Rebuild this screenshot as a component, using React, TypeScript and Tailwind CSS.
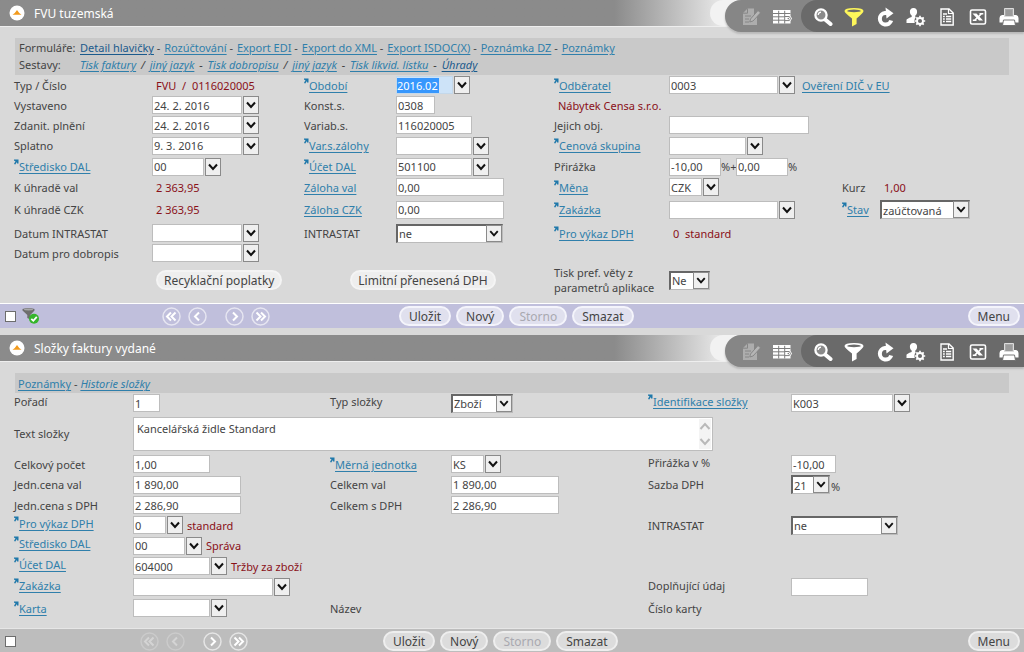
import { useId, type ReactNode } from "react";
import { clsx } from "clsx";

const link = "text-[#2f7fab] underline underline-offset-2";
const currentLink = "text-[#1b5a8c] underline underline-offset-2";

/* ---------- small drawings ---------- */

function Chevron() {
  return (
    <svg viewBox="0 0 16 18" className="h-[18px] w-4" aria-hidden="true">
      <path d="M4 6.5 L8 11 L12 6.5" fill="none" stroke="#111" strokeWidth="2" />
    </svg>
  );
}

function LinkArrow() {
  return (
    <svg viewBox="0 0 5 6" className="h-[6px] w-[5px] shrink-0" aria-hidden="true">
      <path d="M0 0.5 H4.5 V4.5 H3 L2.8 3 L1.3 5.5 L0 5 L1.5 2 L0 1.8 Z" fill="#1f78aa" />
    </svg>
  );
}

function CollapseIcon() {
  return (
    <svg viewBox="0 0 16 16" className="size-4" aria-hidden="true">
      <circle cx="8" cy="8" r="7.5" fill="#fff" />
      <path d="M3.5 9.8 Q6 8.4 8 5 Q10 8.4 12.5 9.8 Z" fill="#f29a1c" />
    </svg>
  );
}

function EditIcon() {
  return (
    <svg viewBox="0 0 20 20" className="size-5" aria-hidden="true">
      <path d="M6.5 1.5 H13 V8 L16 9 V18 H2 V6 Z" fill="#adadad" />
      <path d="M2 6.2 H6.5 V1.5" fill="none" stroke="#868686" strokeWidth="1" />
      <path d="M4 9 H10 M4 12 H8 M4 15 H8" stroke="#868686" strokeWidth="1" />
      <path d="M9.5 12 L17 3.5 L19.6 5.8 L12 14 L8.800 15 Z" fill="#b5b5b5" stroke="#828282" strokeWidth="0.9" />
    </svg>
  );
}

function TableIcon() {
  return (
    <svg viewBox="0 0 20 20" className="size-5" aria-hidden="true">
      <path d="M1 3 H18.500 V9 L20 11.500 L18.500 14 V16.500 H1 Z" fill="#fff" />
      <path d="M1 6.500 H18.500 M1 9.800 H12.500 M1 13.200 H12.500 M6.700 3.800 V16.500 M12.700 3.800 V16.500" stroke="#7d7d7d" strokeWidth="1" />
      <path d="M12.500 9.500 H17.300 L18.500 11.500 L17.300 13.600 H12.500" fill="none" stroke="#7d7d7d" strokeWidth="1" />
      <circle cx="16.300" cy="11.600" r="0.800" fill="#7d7d7d" />
    </svg>
  );
}

function SearchIcon() {
  return (
    <svg viewBox="0 0 20 20" className="size-5" aria-hidden="true">
      <path d="M11.5 12 L17.5 17" stroke="#fff" strokeWidth="4" strokeLinecap="round" />
      <circle cx="8" cy="8" r="5.6" fill="#8a8a8a" stroke="#fff" strokeWidth="2.3" />
      <path d="M5.2 8 A3 3 0 0 1 8 5.2" fill="none" stroke="#fff" strokeWidth="1.2" />
    </svg>
  );
}

function FunnelIcon({ active }: { active?: boolean }) {
  const c = active ? "#fdf65a" : "#fff";
  return (
    <svg viewBox="0 0 20 20" className="size-5" aria-hidden="true">
      <path d="M0.5 4 Q0.5 1 10 1 Q19.5 1 19.5 4 Q19.5 5.8 12.6 11.5 V17 L8 19.5 V11.5 Q0.5 5.8 0.5 4 Z" fill={c} />
      <ellipse cx="10" cy="3.9" rx="6.8" ry="1.3" fill="#6a6a6a" />
    </svg>
  );
}

function ReloadIcon() {
  return (
    <svg viewBox="0 0 20 20" className="size-5" aria-hidden="true">
      <path d="M12 6 H10 A5.800 5.800 0 1 0 16.200 13.500" fill="none" stroke="#fff" strokeWidth="4" />
      <path d="M10.500 0.500 L18.500 6.300 L11.500 11.500 Z" fill="#fff" />
    </svg>
  );
}

function UserGearIcon() {
  return (
    <svg viewBox="0 0 20 20" className="size-5" aria-hidden="true">
      <path d="M7.5 1 C10 1 11.3 2.8 11.1 5 C11 6.8 10.2 7.8 9.3 8.5 V10 L11.5 11.2 L9 16 H0.5 V13 Q0.5 11.8 5.7 10 V8.5 C4.8 7.8 4 6.8 3.9 5 C3.7 2.8 5 1 7.5 1 Z" fill="#fff" />
      <circle cx="14" cy="14" r="5.6" fill="#6a6a6a" />
      <circle cx="14" cy="14" r="3" fill="none" stroke="#fff" strokeWidth="1.9" />
      <path d="M14 8.8 V10.5 M14 17.5 V19.2 M8.8 14 H10.5 M17.5 14 H19.2 M10.3 10.3 L11.6 11.6 M16.4 16.4 L17.7 17.7 M17.7 10.3 L16.4 11.6 M11.6 16.4 L10.3 17.7" stroke="#fff" strokeWidth="1.7" />
    </svg>
  );
}

function DocIcon() {
  return (
    <svg viewBox="0 0 20 20" className="size-5" aria-hidden="true">
      <path d="M4 2 H12 L16.2 6 V18 H4 Z" fill="none" stroke="#fff" strokeWidth="1.4" />
      <path d="M11.5 2 V6.5 H16" fill="none" stroke="#fff" strokeWidth="1.2" />
      <path d="M6 7 H10 M6 9.5 H7.8 M9 9.5 H14.2 M6 12 H7.8 M9 12 H14.2 M6 14.5 H7.8 M9 14.5 H14.2" stroke="#fff" strokeWidth="1.4" />
    </svg>
  );
}

function ExcelIcon() {
  return (
    <svg viewBox="0 0 20 20" className="size-5" aria-hidden="true">
      <rect x="2.5" y="3" width="15" height="14" rx="1.5" fill="none" stroke="#fff" strokeWidth="1.6" />
      <path d="M4.5 6.5 H8.5 L15 13.5 H11 Z" fill="#fff" />
      <path d="M13.8 6.5 L6.3 13.5 M11.5 6.7 H15.3 M4.8 13.3 H8.5" stroke="#fff" strokeWidth="1.6" />
    </svg>
  );
}

function PrinterIcon() {
  return (
    <svg viewBox="0 0 20 20" className="size-5" aria-hidden="true">
      <path d="M3 8 H17 Q19.5 8.5 19.5 11 V15.5 H0.5 V11 Q0.5 8.500 3 8 Z" fill="#fff" />
      <path d="M5.5 9.5 V1.5 H14.5 V9.5 Z" fill="#a9a9a9" stroke="#dcdcdc" strokeWidth="1" />
      <path d="M7 4 H13 M7 6 H13 M7 8 H13" stroke="#858585" strokeWidth="0.8" />
      <path d="M4.5 13 H15.5 L16.5 18.5 H3.5 Z" fill="#fff" stroke="#6a6a6a" strokeWidth="0.9" />
    </svg>
  );
}

function FilterOkIcon() {
  return (
    <svg viewBox="0 0 18 18" className="size-[18px]" aria-hidden="true">
      <path d="M0.5 2 Q6.5 0 12.5 2 V3.5 L8.3 8 V12.5 L5.3 11 V8 L0.5 3.5 Z" fill="#6e6e6e" />
      <ellipse cx="6.5" cy="2.5" rx="4.5" ry="0.9" fill="#a8a8a8" />
      <circle cx="12" cy="11.8" r="5" fill="#35b52c" />
      <path d="M9.3 11.8 L11.3 13.8 L14.8 9.8" fill="none" stroke="#fff" strokeWidth="1.8" />
    </svg>
  );
}

type NavKind = "first" | "prev" | "next" | "last";

const navPaths: Record<NavKind, string> = {
  first: "M9 5.5 L5 9.5 L9 13.5 M13.5 5.5 L9.5 9.5 L13.5 13.5",
  prev: "M11 5.5 L7 9.5 L11 13.5",
  next: "M8 5.5 L12 9.5 L8 13.5",
  last: "M5.5 5.5 L9.5 9.5 L5.5 13.5 M10 5.5 L14 9.5 L10 13.5",
};

function NavButton({ kind, label, dim }: { kind: NavKind; label: string; dim?: boolean }) {
  return (
    <button type="button" aria-label={label} disabled={dim} className={clsx("size-[19px]", dim && "opacity-35")}>
      <svg viewBox="0 0 19 19" className="size-[19px]" aria-hidden="true">
        <circle cx="9.5" cy="9.5" r="8.5" fill="none" stroke="#fff" strokeOpacity="0.6" strokeWidth="1.5" />
        <path d={navPaths[kind]} fill="none" stroke="#fff" strokeWidth="2" />
      </svg>
    </button>
  );
}

/* ---------- form controls ---------- */

function TextField({ id, label, value, className, selected }: {
  id?: string; label: string; value?: string; className: string; selected?: boolean;
}) {
  if (selected) {
    return (
      <span className="flex h-[18px] w-[57px] items-center border border-[#c4d8ea] bg-[#cde3f8]">
        <input
          id={id}
          aria-label={label}
          defaultValue={value}
          className="h-[15px] w-[42px] bg-[#3797fd] text-white outline-none"
        />
      </span>
    );
  }
  return (
    <input
      id={id}
      aria-label={label}
      defaultValue={value}
      className={clsx("h-[18px] border border-[#bdbdbd] bg-white px-px text-[#444] outline-none", className)}
    />
  );
}

function Combo({ id, label, value, width, selected }: {
  id?: string; label: string; value?: string; width: string; selected?: boolean;
}) {
  return (
    <span className="flex items-center gap-px">
      <TextField id={id} label={label} value={value} className={width} selected={selected} />
      <button
        type="button"
        aria-label={`${label} – výběr`}
        className="h-[18px] w-4 bg-[#efefef] outline outline-1 -outline-offset-1 outline-[#8a8a8a]"
      >
        <Chevron />
      </button>
    </span>
  );
}

function Select({ id, label, value, width, options = [] }: {
  id?: string; label: string; value: string; width: string; options?: string[];
}) {
  return (
    <span className="relative flex items-center">
      <select
        id={id}
        aria-label={label}
        defaultValue={value}
        className={clsx(
          "h-[19px] appearance-none border-t-2 border-r border-b border-l-2 border-t-[#666] border-r-[#bbb] border-b-[#bbb] border-l-[#666] bg-white pl-px leading-[15px] text-[#444] outline-none",
          width,
        )}
      >
        <option>{value}</option>
        {options.map((o) => (
          <option key={o}>{o}</option>
        ))}
      </select>
      <span className="pointer-events-none absolute top-px right-px h-[17px] w-4 overflow-hidden border border-[#8a8a8a] bg-[#efefef]">
        <svg viewBox="0 0 14 16" className="h-[15px] w-[14px]" aria-hidden="true">
          <path d="M3 5.5 L7 10 L11 5.5" fill="none" stroke="#111" strokeWidth="2" />
        </svg>
      </span>
    </span>
  );
}

type LabelKind = "plain" | "link" | "arrow";

function Field({ label, kind = "plain", raised, children }: {
  label: ReactNode; kind?: LabelKind; raised?: boolean; children: (id: string) => ReactNode;
}) {
  const id = useId();
  return (
    <>
      <span className={clsx("flex items-center whitespace-nowrap", raised && "pb-1")}>
        <span className="flex items-start">
          {kind === "arrow" && <LinkArrow />}
          {kind === "plain" ? <label htmlFor={id}>{label}</label> : <a href="#" className={link}>{label}</a>}
        </span>
      </span>
      <span className="flex items-center whitespace-nowrap">{children(id)}</span>
    </>
  );
}

function Value({ children }: { children: ReactNode }) {
  return <output className="px-1 whitespace-pre text-[#8a1018]">{children}</output>;
}

function Pill({ children, disabled, tone }: { children: ReactNode; disabled?: boolean; tone: "lavender" | "gray" | "plain" }) {
  return (
    <button
      type="button"
      disabled={disabled}
      className={clsx(
        "flex h-5 items-center rounded-full border-2 text-[12px] whitespace-nowrap",
        disabled ? "text-[#a9a9b0]" : "text-[#444]",
        tone === "lavender" && "border-[#f4f4fb] bg-[#e0e0ee] px-2",
        tone === "gray" && "border-[#eeeeee] bg-[#dcdcdc] px-2",
        tone === "plain" && "border-[#f4f4f4] bg-[#eeeeee] px-1.5",
      )}
    >
      {children}
    </button>
  );
}

/* ---------- panel frame ---------- */

function PanelHeader({ title, filterActive }: { title: string; filterActive?: boolean }) {
  const button = "flex w-[31px] justify-center pt-[7px]";
  return (
    <header className="mb-3 flex h-[26px] items-start justify-between bg-linear-to-r from-[#8b8b8b] from-60% to-[#e4e4e4] to-70% shadow-[0_1px_0_#eeeeee]">
      <div className="flex h-[26px] items-center gap-[9px] pl-[9px]">
        <button type="button" aria-label="Sbalit"><CollapseIcon /></button>
        <h1 className="text-[12px] text-white">{title}</h1>
      </div>
      <div className="h-[26px] rounded-l-full bg-[#f2f2f2] pl-[15px]">
        <div className="flex h-8 rounded-l-full bg-[#868686] pl-[10px] shadow-[0_2px_2px_#b9b9b9]">
          <button type="button" aria-label="Upravit" className={button}><EditIcon /></button>
          <button type="button" aria-label="Tabulka" className={button}><TableIcon /></button>
          <div className="ml-1 flex rounded-l-full bg-[#6a6a6a] pl-[6px]">
            <button type="button" aria-label="Hledat" className={button}><SearchIcon /></button>
            <button type="button" aria-label="Filtr" className={button}><FunnelIcon active={filterActive} /></button>
            <button type="button" aria-label="Obnovit" className={button}><ReloadIcon /></button>
            <button type="button" aria-label="Nastavení uživatele" className={button}><UserGearIcon /></button>
            <button type="button" aria-label="Dokument" className={button}><DocIcon /></button>
            <button type="button" aria-label="Excel" className={button}><ExcelIcon /></button>
            <button type="button" aria-label="Tisk" className={button}><PrinterIcon /></button>
          </div>
        </div>
      </div>
    </header>
  );
}

function PanelFooter({ tone, id }: { tone: "lavender" | "gray"; id: string }) {
  const lavender = tone === "lavender";
  return (
    <footer
      className={clsx(
        "flex items-center border-t pr-1",
        lavender ? "h-[25px] border-white bg-[#c0bfdc]" : "h-[25px] border-[#e6e6e6] bg-[#bdbdbd]",
      )}
    >
      <div className={clsx("flex items-center gap-[6px] pl-[5px]", lavender ? "w-[162px]" : "w-[140px]")}>
        <input
          type="checkbox"
          id={id}
          aria-label="Vybrat záznam"
          className="size-[11px] appearance-none border border-[#6d6d6d] bg-white checked:bg-[#555]"
        />
        {lavender && <FilterOkIcon />}
      </div>
      <div className={clsx("flex gap-[7px]", lavender ? "w-[237px]" : "w-[243px]")}>
        <NavButton kind="first" label="První" dim={!lavender} />
        <NavButton kind="prev" label="Předchozí" dim={!lavender} />
        <span className="w-1" />
        <NavButton kind="next" label="Další" />
        <NavButton kind="last" label="Poslední" />
      </div>
      <div className="flex flex-1 gap-[5px]">
        <Pill tone={tone}>Uložit</Pill>
        <Pill tone={tone}>Nový</Pill>
        <Pill tone={tone} disabled>Storno</Pill>
        <Pill tone={tone}>Smazat</Pill>
      </div>
      <Pill tone={tone}>Menu</Pill>
    </footer>
  );
}

const forms = ["Rozúčtování", "Export EDI", "Export do XML", "Export ISDOC(X)", "Poznámka DZ", "Poznámky"];

const reports = [
  { text: "Tisk faktury", after: " / " },
  { text: "jiný jazyk", after: " - " },
  { text: "Tisk dobropisu", after: " / " },
  { text: "jiný jazyk", after: " - " },
  { text: "Tisk likvid. lístku", after: " - " },
];

function InvoicePanel() {
  return (
    <section>
      <PanelHeader title="FVU tuzemská" filterActive />
      <nav className="mx-[15px] h-[37px] bg-[#c9c9c9] pt-px pl-1 leading-[17px] whitespace-nowrap">
        <div className="flex">
          <span className="w-[61px]">Formuláře:</span>
          <span>
            <a href="#" className={currentLink}>Detail hlavičky</a>
            {forms.map((f) => (
              <span key={f}>
                <span className="pr-px"> - </span>
                <a href="#" className={link}>{f}</a>
              </span>
            ))}
          </span>
        </div>
        <div className="flex">
          <span className="w-[61px]">Sestavy:</span>
          <span className="italic">
            {reports.map((r, i) => (
              <span key={i}>
                <a href="#" className={link}>{r.text}</a>
                <span className="px-[2px]">{r.after}</span>
              </span>
            ))}
            <a href="#" className={currentLink}>Úhrady</a>
          </span>
        </div>
      </nav>
      <form className="grid grid-cols-[138fr_152fr_92fr_158fr_115fr_173fr_38fr_144fr] grid-rows-[20px_20px_20px_21px_21px_20px_25px_22px_18px_36px] pb-[5px] pl-[14px]">
        <Field label="Typ / Číslo">{() => <Value>{"FVU  /  0116020005"}</Value>}</Field>
        <Field label="Období" kind="arrow">{(id) => <Combo id={id} label="Období" value="2016.02" width="w-[57px]" selected />}</Field>
        <Field label="Odběratel" kind="arrow">{(id) => <Combo id={id} label="Odběratel" value="0003" width="w-[109px]" />}</Field>
        <span className="col-span-2 flex items-center">
          <a href="#" className={clsx(link, "-ml-10 whitespace-nowrap")}>Ověření DIČ v EU</a>
        </span>

        <Field label="Vystaveno">{(id) => <Combo id={id} label="Vystaveno" value="24. 2. 2016" width="w-[90px]" />}</Field>
        <Field label="Konst.s.">{(id) => <TextField id={id} label="Konst.s." value="0308" className="w-[39px]" />}</Field>
        <span className="col-span-4 flex items-center"><Value>Nábytek Censa s.r.o.</Value></span>

        <Field label="Zdanit. plnění">{(id) => <Combo id={id} label="Zdanit. plnění" value="24. 2. 2016" width="w-[90px]" />}</Field>
        <Field label="Variab.s.">{(id) => <TextField id={id} label="Variab.s." value="116020005" className="w-[76px]" />}</Field>
        <Field label="Jejich obj.">{(id) => <TextField id={id} label="Jejich obj." className="w-[140px]" />}</Field>
        <span className="col-span-2" />

        <Field label="Splatno">{(id) => <Combo id={id} label="Splatno" value="9. 3. 2016" width="w-[90px]" />}</Field>
        <Field label="Var.s.zálohy" kind="arrow">{(id) => <Combo id={id} label="Var.s.zálohy" width="w-[76px]" />}</Field>
        <Field label="Cenová skupina" kind="arrow">{(id) => <Combo id={id} label="Cenová skupina" width="w-[77px]" />}</Field>
        <span className="col-span-2" />

        <Field label="Středisko DAL" kind="arrow">{(id) => <Combo id={id} label="Středisko DAL" value="00" width="w-[52px]" />}</Field>
        <Field label="Účet DAL" kind="arrow">{(id) => <Combo id={id} label="Účet DAL" value="501100" width="w-[76px]" />}</Field>
        <Field label="Přirážka">
          {(id) => (
            <>
              <TextField id={id} label="Přirážka" value="-10,00" className="w-[52px]" />
              <span className="w-[15px]">%+</span>
              <TextField label="Další přirážka" value="0,00" className="w-[52px]" />
              <span>%</span>
            </>
          )}
        </Field>
        <span className="col-span-2" />

        <Field label="K úhradě val">{() => <Value>2 363,95</Value>}</Field>
        <Field label="Záloha val" kind="link">{(id) => <TextField id={id} label="Záloha val" value="0,00" className="w-[108px]" />}</Field>
        <Field label="Měna" kind="arrow">{(id) => <Combo id={id} label="Měna" value="CZK" width="w-[33px]" />}</Field>
        <Field label="Kurz">{() => <Value>1,00</Value>}</Field>

        <Field label="K úhradě CZK">{() => <Value>2 363,95</Value>}</Field>
        <Field label="Záloha CZK" kind="link">{(id) => <TextField id={id} label="Záloha CZK" value="0,00" className="w-[108px]" />}</Field>
        <Field label="Zakázka" kind="arrow">{(id) => <Combo id={id} label="Zakázka" width="w-[109px]" />}</Field>
        <Field label="Stav" kind="arrow">{(id) => <Select id={id} label="Stav" value="zaúčtovaná" width="w-[90px]" />}</Field>

        <Field label="Datum INTRASTAT">{(id) => <Combo id={id} label="Datum INTRASTAT" width="w-[90px]" />}</Field>
        <Field label="INTRASTAT">{(id) => <Select id={id} label="INTRASTAT" value="ne" width="w-[107px]" options={["ano"]} />}</Field>
        <Field label="Pro výkaz DPH" kind="arrow">{() => <Value>{"0  standard"}</Value>}</Field>
        <span className="col-span-2" />

        <Field label="Datum pro dobropis">{(id) => <Combo id={id} label="Datum pro dobropis" width="w-[90px]" />}</Field>
        <span className="col-span-6" />

        <span />
        <span className="flex items-center pl-1"><Pill tone="plain">Recyklační poplatky</Pill></span>
        <span className="col-span-2 flex items-center justify-center pr-[12px]"><Pill tone="plain">Limitní přenesená DPH</Pill></span>
        <Field label={<>Tisk pref. věty z<br />parametrů aplikace</>}>
          {(id) => <Select id={id} label="Tisk pref. věty z parametrů aplikace" value="Ne" width="w-[41px]" options={["Ano"]} />}
        </Field>
      </form>
      <PanelFooter tone="lavender" id="invoice-mark" />
    </section>
  );
}

function ItemPanel() {
  return (
    <section>
      <PanelHeader title="Složky faktury vydané" />
      <nav className="mx-[15px] h-5 bg-[#c9c9c9] pt-[2px] pl-[3px] leading-[17px]">
        <a href="#" className={link}>Poznámky</a> - <a href="#" className={clsx(link, "italic")}>Historie složky</a>
      </nav>
      <form className="grid grid-cols-[119fr_197fr_121fr_197fr_143fr_233fr] grid-rows-[20px_41px_20px_21px_20px_20px_21px_20px_22px_20px] pb-[10px] pl-[14px]">
        <Field label="Pořadí" raised>{(id) => <TextField id={id} label="Pořadí" value="1" className="w-[27px]" />}</Field>
        <Field label="Typ složky" raised>{(id) => <Select id={id} label="Typ složky" value="Zboží" width="w-[62px]" />}</Field>
        <Field label="Identifikace složky" kind="arrow" raised>{(id) => <Combo id={id} label="Identifikace složky" value="K003" width="w-[102px]" />}</Field>

        <label htmlFor="item-text" className="flex items-center">Text složky</label>
        <span className="relative col-span-4 mr-[78px] flex items-center">
          <textarea
            id="item-text"
            defaultValue="Kancelářská židle Standard"
            className="h-[34px] w-full resize-none overflow-hidden border border-[#bdbdbd] bg-white px-[3px] py-[3px] text-[#444] outline-none"
          />
          <svg viewBox="0 0 12 30" className="pointer-events-none absolute right-[2px] h-[30px] w-3" aria-hidden="true">
            <rect width="12" height="30" fill="#f4f4f4" />
            <path d="M1.5 10 L6 5 L10.5 10 M1.5 20 L6 25 L10.5 20" fill="none" stroke="#b9b9b9" strokeWidth="2" />
          </svg>
        </span>
        <span />

        <Field label="Celkový počet">{(id) => <TextField id={id} label="Celkový počet" value="1,00" className="w-[77px]" />}</Field>
        <Field label="Měrná jednotka" kind="arrow">{(id) => <Combo id={id} label="Měrná jednotka" value="KS" width="w-[33px]" />}</Field>
        <Field label="Přirážka v %" raised>{(id) => <TextField id={id} label="Přirážka v %" value="-10,00" className="w-[45px]" />}</Field>

        <Field label="Jedn.cena val">{(id) => <TextField id={id} label="Jedn.cena val" value="1 890,00" className="w-[108px]" />}</Field>
        <Field label="Celkem val">{(id) => <TextField id={id} label="Celkem val" value="1 890,00" className="w-[108px]" />}</Field>
        <Field label="Sazba DPH">
          {(id) => (
            <>
              <Select id={id} label="Sazba DPH" value="21" width="w-[39px]" options={["15", "10"]} />
              <span className="pt-1 pl-px">%</span>
            </>
          )}
        </Field>

        <Field label="Jedn.cena s DPH">{(id) => <TextField id={id} label="Jedn.cena s DPH" value="2 286,90" className="w-[108px]" />}</Field>
        <Field label="Celkem s DPH">{(id) => <TextField id={id} label="Celkem s DPH" value="2 286,90" className="w-[108px]" />}</Field>
        <span className="col-span-2" />

        <Field label="Pro výkaz DPH" kind="arrow" raised>
          {(id) => (<><Combo id={id} label="Pro výkaz DPH" value="0" width="w-[33px]" /><Value>standard</Value></>)}
        </Field>
        <span className="col-span-2" />
        <Field label="INTRASTAT">{(id) => <Select id={id} label="INTRASTAT" value="ne" width="w-[107px]" options={["ano"]} />}</Field>

        <Field label="Středisko DAL" kind="arrow" raised>
          {(id) => (<><Combo id={id} label="Středisko DAL" value="00" width="w-[52px]" /><Value>Správa</Value></>)}
        </Field>
        <span className="col-span-4" />

        <Field label="Účet DAL" kind="arrow" raised>
          {(id) => (<><Combo id={id} label="Účet DAL" value="604000" width="w-[77px]" /><Value>Tržby za zboží</Value></>)}
        </Field>
        <span className="col-span-4" />

        <Field label="Zakázka" kind="arrow" raised>{(id) => <Combo id={id} label="Zakázka" width="w-[140px]" />}</Field>
        <span className="col-span-2" />
        <Field label="Doplňující údaj" raised>{(id) => <TextField id={id} label="Doplňující údaj" className="w-[77px]" />}</Field>

        <Field label="Karta" kind="arrow">{(id) => <Combo id={id} label="Karta" width="w-[77px]" />}</Field>
        <Field label="Název">{() => null}</Field>
        <Field label="Číslo karty">{() => null}</Field>
      </form>
      <PanelFooter tone="gray" id="item-mark" />
    </section>
  );
}

export default function App() {
  return (
    <main className="flex min-h-screen flex-col gap-[7px] overflow-x-hidden bg-[#d9d9d9] font-['Noto_Sans','Open_Sans',sans-serif] text-[11px] leading-[15px] text-[#444]">
      <InvoicePanel />
      <ItemPanel />
    </main>
  );
}
